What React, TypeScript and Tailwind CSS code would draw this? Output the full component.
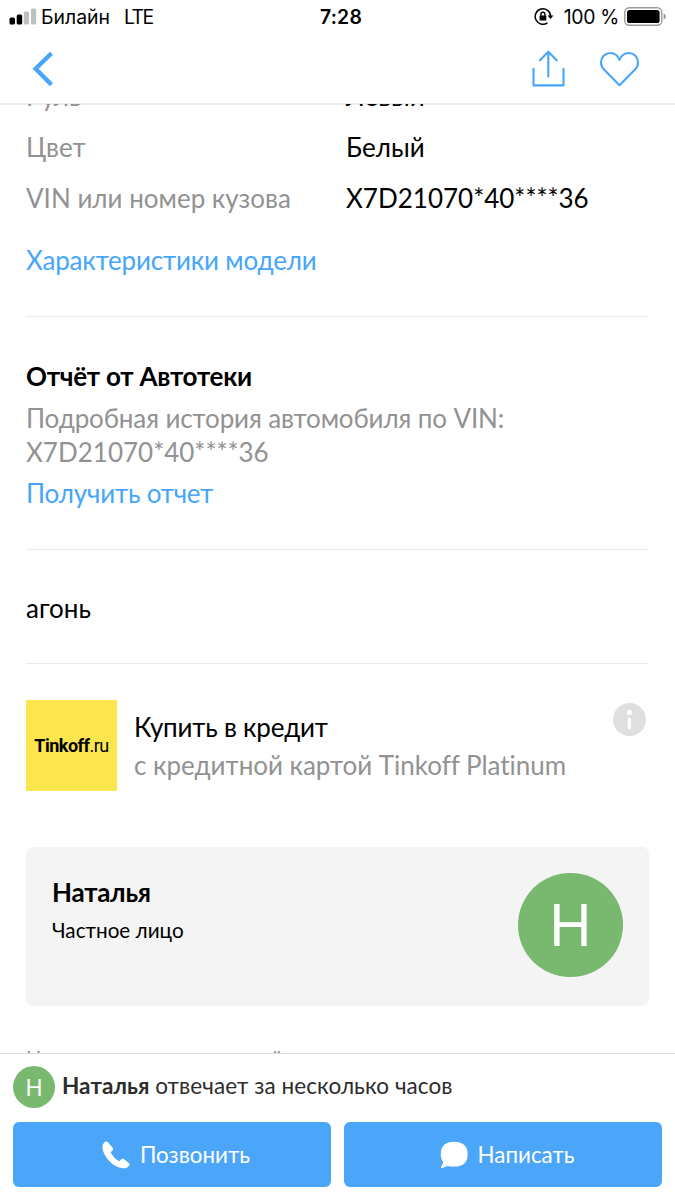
import { ReactNode } from "react";

const specs = [
  { label: "Руль", value: "Левый" },
  { label: "Цвет", value: "Белый" },
  { label: "VIN или номер кузова", value: "X7D21070*40****36" },
];

const StatusBar = () => {
  return (
    <div className="flex h-[34px] items-center font-['Inter',sans-serif] text-[19.4px] leading-[34px] text-black">
      <div className="flex w-[320px] items-center pl-[9px]">
        <svg width="28" height="18" viewBox="0 0 28 18">
          <rect x="0.5" y="9.5" width="5.5" height="7" rx="1.5" fill="#000" />
          <rect x="7.7" y="6.5" width="5.5" height="10" rx="1.5" fill="#000" />
          <rect x="14.8" y="3.5" width="5.3" height="13" rx="1.5" fill="#bfbfbf" />
          <rect x="22" y="0.5" width="5.2" height="16" rx="1.5" fill="#bfbfbf" />
        </svg>
        <span className="ml-[4px]">Билайн</span>
        <span className="ml-[14px] tracking-[-1.5px]">LTE</span>
      </div>
      <span className="font-semibold tracking-[0.2px]">7:28</span>
      <div className="ml-auto flex items-center pr-[8px]">
        {/* Orientation lock */}
        <svg width="20" height="18" viewBox="0 0 20 18">
          <path d="M16.6 8.3A7.7 7.7 0 1 0 13.4 14.8" fill="none" stroke="#000" strokeWidth="1.5" />
          <path d="M13.6 7.4h5.8l-2.9 3.6z" fill="#000" />
          <path d="M6.9 8V6.3a2 2 0 0 1 4 0V8" fill="none" stroke="#000" strokeWidth="1.4" />
          <rect x="5.6" y="7.4" width="6.7" height="5.2" rx="0.6" fill="#000" />
        </svg>
        <span className="ml-[10px] tracking-[-0.3px]">100 %</span>
        <svg className="ml-[5px]" width="43" height="20" viewBox="0 0 43 20">
          <rect x="0.8" y="0.8" width="37" height="17.4" rx="4.5" fill="none" stroke="#999" strokeWidth="1.4" />
          <rect x="3" y="3" width="32.6" height="13" rx="2.6" fill="#000" />
          <path d="M39.6 6.5q2.4 1 2.4 3t-2.4 3z" fill="#999" />
        </svg>
      </div>
    </div>
  );
};

const NavBar = () => {
  return (
    <div className="flex h-[69px] text-[#47a6fa]">
      <svg className="mt-[16px] ml-[32px]" width="22" height="38" viewBox="0 0 22 38">
        <path d="M19.5 3.2L3.6 18.8l15.9 15.8" fill="none" stroke="currentColor" strokeWidth="4.3" />
      </svg>
      <svg
        className="mt-[15px] ml-auto"
        width="34"
        height="40"
        viewBox="0 0 34 40"
        fill="none"
        stroke="currentColor"
        strokeWidth="2.1"
        strokeLinecap="round"
        strokeLinejoin="round"
      >
        <path d="M2.5 19.8v16.6h30V19.8M17.3 27.5V2.7M8.900 11.300l8.400-8.600 8.400 8.600" />
      </svg>
      <svg className="mt-[17px] mr-[35px] ml-[34px]" width="41" height="37" viewBox="0 0 41 37">
        <path
          d="M20.5 8.9C18.6 4.1 15.2 2 11.3 2 6 2 2 6.1 2 11.3c0 2.9 1 5.3 3 7.300L20.5 34.2 36 18.6c2-2 3-4.400 3-7.300C39 6.1 35 2 29.7 2c-3.900 0-7.300 2.100-9.200 6.900z"
          fill="none"
          stroke="currentColor"
          strokeWidth="2.1"
          strokeLinejoin="round"
        />
      </svg>
    </div>
  );
};

const Link = ({ children }: { children: ReactNode }) => {
  return <a className="block leading-[34px] tracking-[-0.18px] text-[#47a6fa]">{children}</a>;
};

const Avatar = ({ className }: { className: string }) => {
  return (
    <div
      className={`flex shrink-0 items-center justify-center rounded-full bg-[#79b96f] pt-[2px] font-['Inter',sans-serif] text-white ${className}`}
    >
      Н
    </div>
  );
};

const ActionButton = ({ icon, children }: { icon: ReactNode; children: ReactNode }) => {
  return (
    <button
      type="button"
      className="flex h-[65px] w-[318px] items-center justify-center rounded-[6px] bg-[#4ba6f9] pt-px pl-[8px] text-[22.4px] text-white"
    >
      {icon}
      {children}
    </button>
  );
};

const App = () => {
  return (
    <div className="flex h-[1200px] w-[675px] flex-col overflow-hidden bg-white font-['Lato',sans-serif] text-[26px] text-black [font-variant-ligatures:none]">
      <header className="h-[105px] shrink-0 border-b-2 border-[#ededed]">
        <StatusBar />
        <NavBar />
      </header>

      {/* Starts one pixel up so the scrolled row shows over the header line */}
      <main className="-mt-px h-[949px] shrink-0 overflow-hidden px-[26px]">
        <dl className="-mt-[33px]">
          {specs.map((spec) => (
            <div key={spec.label} className="flex h-[51px] leading-[51px]">
              <dt className="w-[320px] text-[#929292]">{spec.label}</dt>
              <dd>{spec.value}</dd>
            </div>
          ))}
        </dl>
        <div className="h-[93px] border-b border-[#e9e9e9] pt-[19px]">
          <Link>Характеристики модели</Link>
        </div>

        <section className="h-[233px] border-b border-[#e9e9e9] pt-[42px]">
          <h2 className="leading-[34px] font-bold tracking-[-0.25px]">Отчёт от Автотеки</h2>
          <div className="mt-[8px] mb-[7px] leading-[34px] text-[#929292]">
            <p className="tracking-[-0.12px]">Подробная история автомобиля по VIN:</p>
            <p>X7D21070*40****36</p>
          </div>
          <Link>Получить отчет</Link>
        </section>

        <p className="h-[114px] border-b border-[#e9e9e9] pt-[41px] leading-[34px]">агонь</p>

        <section className="mt-[36px] flex h-[91px]">
          <div className="flex w-[91px] items-center justify-center bg-[#fbe64d] font-['Roboto',sans-serif] text-[18px] tracking-[-0.5px]">
            <b>Tinkoff</b>.ru
          </div>
          <div className="ml-[17px] pt-[10px] leading-[34px]">
            <p className="tracking-[-0.2px]">Купить в кредит</p>
            <p className="mt-[4px] tracking-[-0.03px] text-[#929292]">с кредитной картой Tinkoff Platinum</p>
          </div>
          <svg className="mt-[3px] mr-[3px] ml-auto" width="33" height="33" viewBox="0 0 33 33">
            <circle cx="16.5" cy="16.5" r="16.5" fill="#dfdfdf" />
            <circle cx="16.4" cy="9.4" r="2.6" fill="#fff" />
            <rect x="14.7" y="14.6" width="3.4" height="12" rx="1.7" fill="#fff" />
          </svg>
        </section>

        <section className="mt-[56px] flex h-[159px] justify-between rounded-[7px] bg-[#f4f4f4] px-[26px] pt-[26px]">
          <div>
            <h2 className="mt-[2px] leading-[34px] font-bold tracking-[-0.25px]">Наталья</h2>
            <p className="mt-[8px] text-[20.7px] leading-[26px]">Частное лицо</p>
          </div>
          <Avatar className="h-[104px] w-[105px] text-[57px]" />
        </section>

        <p className="mt-[38px] text-[20px] leading-[26px] whitespace-nowrap text-[#929292]">
          Номер можно сменить ещё
        </p>
      </main>

      <footer className="grow border-t border-[#dedede] px-[13px] pt-[12px] text-[22.5px]">
        <div className="flex h-[42px] items-center text-[#2d2d2d]">
          <Avatar className="h-[42px] w-[42px] text-[23px]" />
          <p className="ml-[7px] pb-[3px] tracking-[0.08px]">
            <b>Наталья</b> отвечает за несколько часов
          </p>
        </div>
        <div className="mt-[14px] flex gap-[13px]">
          <ActionButton
            icon={
              <svg className="mr-[10px]" width="28" height="28" viewBox="0 0 28 28" fill="#fff">
                <path d="M4.4.5C3.6.2 3.1.7 2.5 1.3 1 2.8.2 4.4.5 7.2 1.6 16.2 11.3 26.3 20.7 27.3c2.6.2 4.2-.4 5.6-1.8l1-1.2c.6-.8.5-1.5-.2-2.1l-5.3-4.1c-.8-.6-1.6-.6-2.2 0l-2.4 2.2c-3.3-1.7-6.9-5.5-8.5-8.9l2-2.3c.6-.7.6-1.4.1-2.2L6.2 1.4C5.7.8 5.2.6 4.4.5z" />
              </svg>
            }
          >
            Позвонить
          </ActionButton>
          <ActionButton
            icon={
              <svg className="mr-[10px]" width="28" height="28" viewBox="0 0 28 28" fill="#fff">
                <path d="M14 .8C5.6.8.8 4.6.8 13.2c0 3.2.8 5.6 2.2 7.3.2 1.7-.6 3.1-1.8 4.9-.6 1 .1 1.9 1.2 1.6l5.2-2c1.9.4 4 .6 6.4.6 8.6 0 13.7-3.8 13.7-12.4C27.7 4.6 22.6.8 14 .8z" />
              </svg>
            }
          >
            Написать
          </ActionButton>
        </div>
      </footer>
    </div>
  );
};

export default App;
